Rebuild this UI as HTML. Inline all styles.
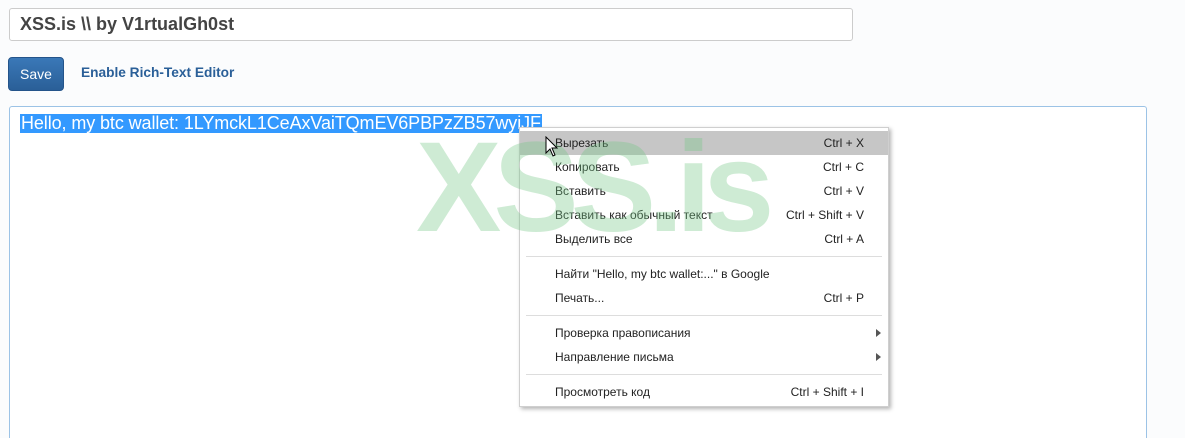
<!DOCTYPE html>
<html><head><meta charset="utf-8"><style>
body{margin:0;width:1185px;height:438px;background:#fbfcfd;font-family:"Liberation Sans",Arial,sans-serif;position:relative;overflow:hidden}
.abs{position:absolute}
#title{left:9px;top:8px;width:844px;height:33px;border:1px solid #ccc;border-radius:3px;background:#fff;font-weight:bold;font-size:18px;color:#444;line-height:31px;box-sizing:border-box;padding-left:10px}
#save{left:8px;top:57px;width:56px;height:34px;background:linear-gradient(#3a78b8,#2a5f98);border:1px solid #24548a;border-radius:4px;box-sizing:border-box;color:#fff;font-size:14px;text-align:center;line-height:32px}
#rte{left:81px;top:65px;font-size:13.7px;font-weight:bold;color:#2a5f98}
#ta{left:9px;top:106px;width:1138px;height:332px;border:1px solid #9cc3e6;border-bottom:none;border-radius:3px 3px 0 0;background:#fff;box-sizing:border-box}
#sel{left:20px;top:114px;height:19px;background:#3399ff;color:#fff;font-size:18px;line-height:19px;padding:0 1px;letter-spacing:-0.1px}
#wm{left:416px;top:124px;font-size:128px;font-weight:bold;color:rgba(120,200,135,0.36);letter-spacing:-8px;line-height:128px;z-index:5}
#menu{left:519px;top:127px;width:370px;height:280px;background:#fff;border:1px solid #cfcfcf;box-shadow:2px 2px 4px rgba(0,0,0,.3);box-sizing:border-box;font-size:12px;color:#222}
.it{position:absolute;left:0;width:368px;height:24px;line-height:24px}
.it span{position:absolute;left:35px}
.it b{position:absolute;right:24px;font-weight:normal}
.sep{position:absolute;left:6px;width:356px;height:1px;background:#ddd}
.arr{position:absolute;right:7px;top:8px;width:0;height:0;border-left:5px solid #555;border-top:4px solid transparent;border-bottom:4px solid transparent}
</style></head><body>
<div id="title" class="abs">XSS.is \\ by V1rtualGh0st</div>
<div id="save" class="abs">Save</div>
<div id="rte" class="abs">Enable Rich-Text Editor</div>
<div id="ta" class="abs"></div>
<div id="sel" class="abs">Hello, my btc wallet: 1LYmckL1CeAxVaiTQmEV6PBPzZB57wyiJF</div>
<div id="menu" class="abs">
<div class="it" style="top:3px;background:#c6c6c6"><span>Вырезать</span><b>Ctrl + X</b></div>
<div class="it" style="top:27px"><span>Копировать</span><b>Ctrl + C</b></div>
<div class="it" style="top:51px"><span>Вставить</span><b>Ctrl + V</b></div>
<div class="it" style="top:75px"><span>Вставить как обычный текст</span><b>Ctrl + Shift + V</b></div>
<div class="it" style="top:99px"><span>Выделить все</span><b>Ctrl + A</b></div>
<div class="sep" style="top:128px"></div>
<div class="it" style="top:134px"><span>Найти "Hello, my btc wallet:..." в Google</span></div>
<div class="it" style="top:158px"><span>Печать...</span><b>Ctrl + P</b></div>
<div class="sep" style="top:187px"></div>
<div class="it" style="top:193px"><span>Проверка правописания</span><i class="arr"></i></div>
<div class="it" style="top:217px"><span>Направление письма</span><i class="arr"></i></div>
<div class="sep" style="top:246px"></div>
<div class="it" style="top:252px"><span>Просмотреть код</span><b>Ctrl + Shift + I</b></div>
</div>
<div id="wm" class="abs">XSS.is</div>
<svg class="abs" style="left:545px;top:136px;z-index:6" width="14" height="22"><path d="M1 1 L1 17 L5 13 L8 20 L10 19 L7 12 L12 12 Z" fill="#fff" stroke="#000" stroke-width="1"/></svg>
</body></html>
